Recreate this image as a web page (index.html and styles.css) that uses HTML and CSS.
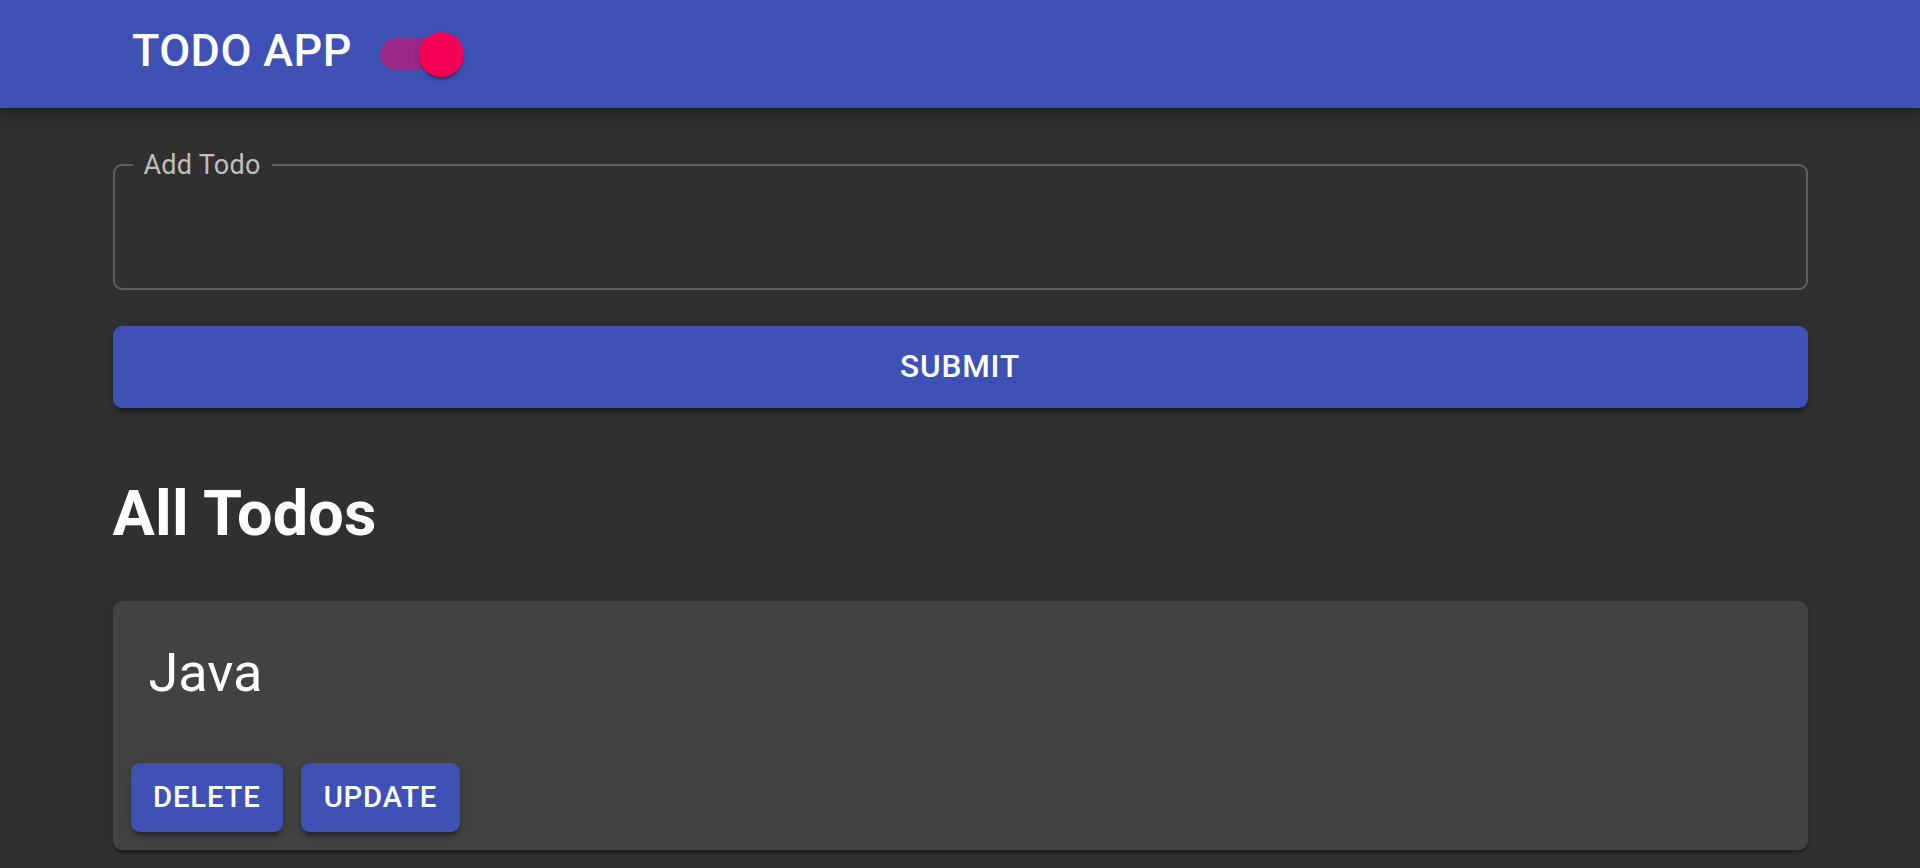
FILE: index.html
```html
<!DOCTYPE html>
<html lang="en">
<head>
<meta charset="utf-8">
<title>Todo App</title>
<link rel="stylesheet" href="styles.css">
</head>
<body>
<header class="appbar">
  <div class="toolbar">
    <h1 class="title">TODO APP</h1>
    <span class="switch">
      <span class="switch-track"></span>
      <span class="switch-thumb"></span>
    </span>
  </div>
</header>
<main class="container">
  <form class="todo-form">
    <fieldset class="field">
      <legend class="field-label">Add Todo</legend>
      <div class="field-input"></div>
    </fieldset>
    <button type="button" class="btn btn-submit">SUBMIT</button>
  </form>
  <h2 class="section-title">All Todos</h2>
  <section class="card">
    <div class="card-content">
      <h3 class="todo-text">Java</h3>
    </div>
    <div class="card-actions">
      <button type="button" class="btn btn-small">DELETE</button>
      <button type="button" class="btn btn-small">UPDATE</button>
    </div>
  </section>
</main>
</body>
</html>
```

FILE: styles.css
```css
* { box-sizing: border-box; }

html, body {
  margin: 0;
  padding: 0;
}

body {
  background: #303030;
  color: #ffffff;
  font-family: Roboto, "Liberation Sans", Arial, sans-serif;
  min-height: 868px;
  overflow: hidden;
}

.appbar {
  background: #3f51b5;
  height: 107.5px;
  position: relative;
  z-index: 2;
  box-shadow: 0 4.5px 9px -2px rgba(0,0,0,0.2), 0 9px 11px 0 rgba(0,0,0,0.14), 0 2px 22px 0 rgba(0,0,0,0.12);
}

.toolbar {
  height: 107.5px;
  display: flex;
  align-items: center;
  padding-left: 132px;
}

.title {
  margin: 0 0 6px 0;
  font-size: 45px;
  font-weight: 500;
  line-height: 1;
  letter-spacing: 0.4px;
}

.switch {
  position: relative;
  display: block;
  width: 77px;
  height: 32px;
  margin-left: 28px;
}

.switch-track {
  display: block;
  width: 100%;
  height: 100%;
  border-radius: 16px;
  background: #9a2886;
}

.switch-thumb {
  position: absolute;
  width: 45px;
  height: 45px;
  border-radius: 50%;
  right: -7px;
  top: -6px;
  background: #f50057;
  box-shadow: 0 4.5px 2px -2px rgba(0,0,0,0.2), 0 2px 2px 0 rgba(0,0,0,0.14), 0 2px 7px 0 rgba(0,0,0,0.12);
}

.container {
  width: 1695px;
  margin: 0 auto;
  padding-top: 41px;
}

.todo-form {
  display: flex;
  flex-direction: column;
}

.field {
  margin: 0;
  padding: 0 18px;
  border: 2px solid rgba(255,255,255,0.23);
  border-radius: 9px;
}

.field-label {
  padding: 0 11px;
  font-size: 27px;
  letter-spacing: 0.25px;
  line-height: normal;
  color: rgba(255,255,255,0.7);
}

.field-input {
  height: 107px;
}

.btn {
  border: none;
  background: #3f51b5;
  color: #ffffff;
  font-family: Roboto, "Liberation Sans", Arial, sans-serif;
  font-weight: 500;
  text-transform: uppercase;
  border-radius: 9px;
  cursor: pointer;
  box-shadow: 0 6.75px 2px -4.5px rgba(0,0,0,0.2), 0 4.5px 4.5px 0 rgba(0,0,0,0.14), 0 2px 11px 0 rgba(0,0,0,0.12);
}

.btn-submit {
  margin-top: 36px;
  height: 82px;
  width: 100%;
  font-size: 31.5px;
  letter-spacing: 0.9px;
  line-height: 1.75;
}

.section-title {
  margin: 67px 0 49px 0;
  font-size: 63px;
  font-weight: 700;
  line-height: 1.235;
  letter-spacing: 0.2px;
}

.card {
  background: #424242;
  border-radius: 9px;
  box-shadow: 0 4.5px 2px -2px rgba(0,0,0,0.2), 0 2px 2px 0 rgba(0,0,0,0.14), 0 2px 7px 0 rgba(0,0,0,0.12);
}

.card-content {
  padding: 36px 36px 36px 36px;
}

.todo-text {
  margin: 0;
  font-size: 54px;
  font-weight: 400;
  line-height: 72px;
}

.card-actions {
  display: flex;
  gap: 18px;
  padding: 18px;
}

.btn-small {
  padding: 9px 22.5px;
  min-width: 144px;
  font-size: 29.25px;
  letter-spacing: 0.84px;
  line-height: 1.75;
}
```
